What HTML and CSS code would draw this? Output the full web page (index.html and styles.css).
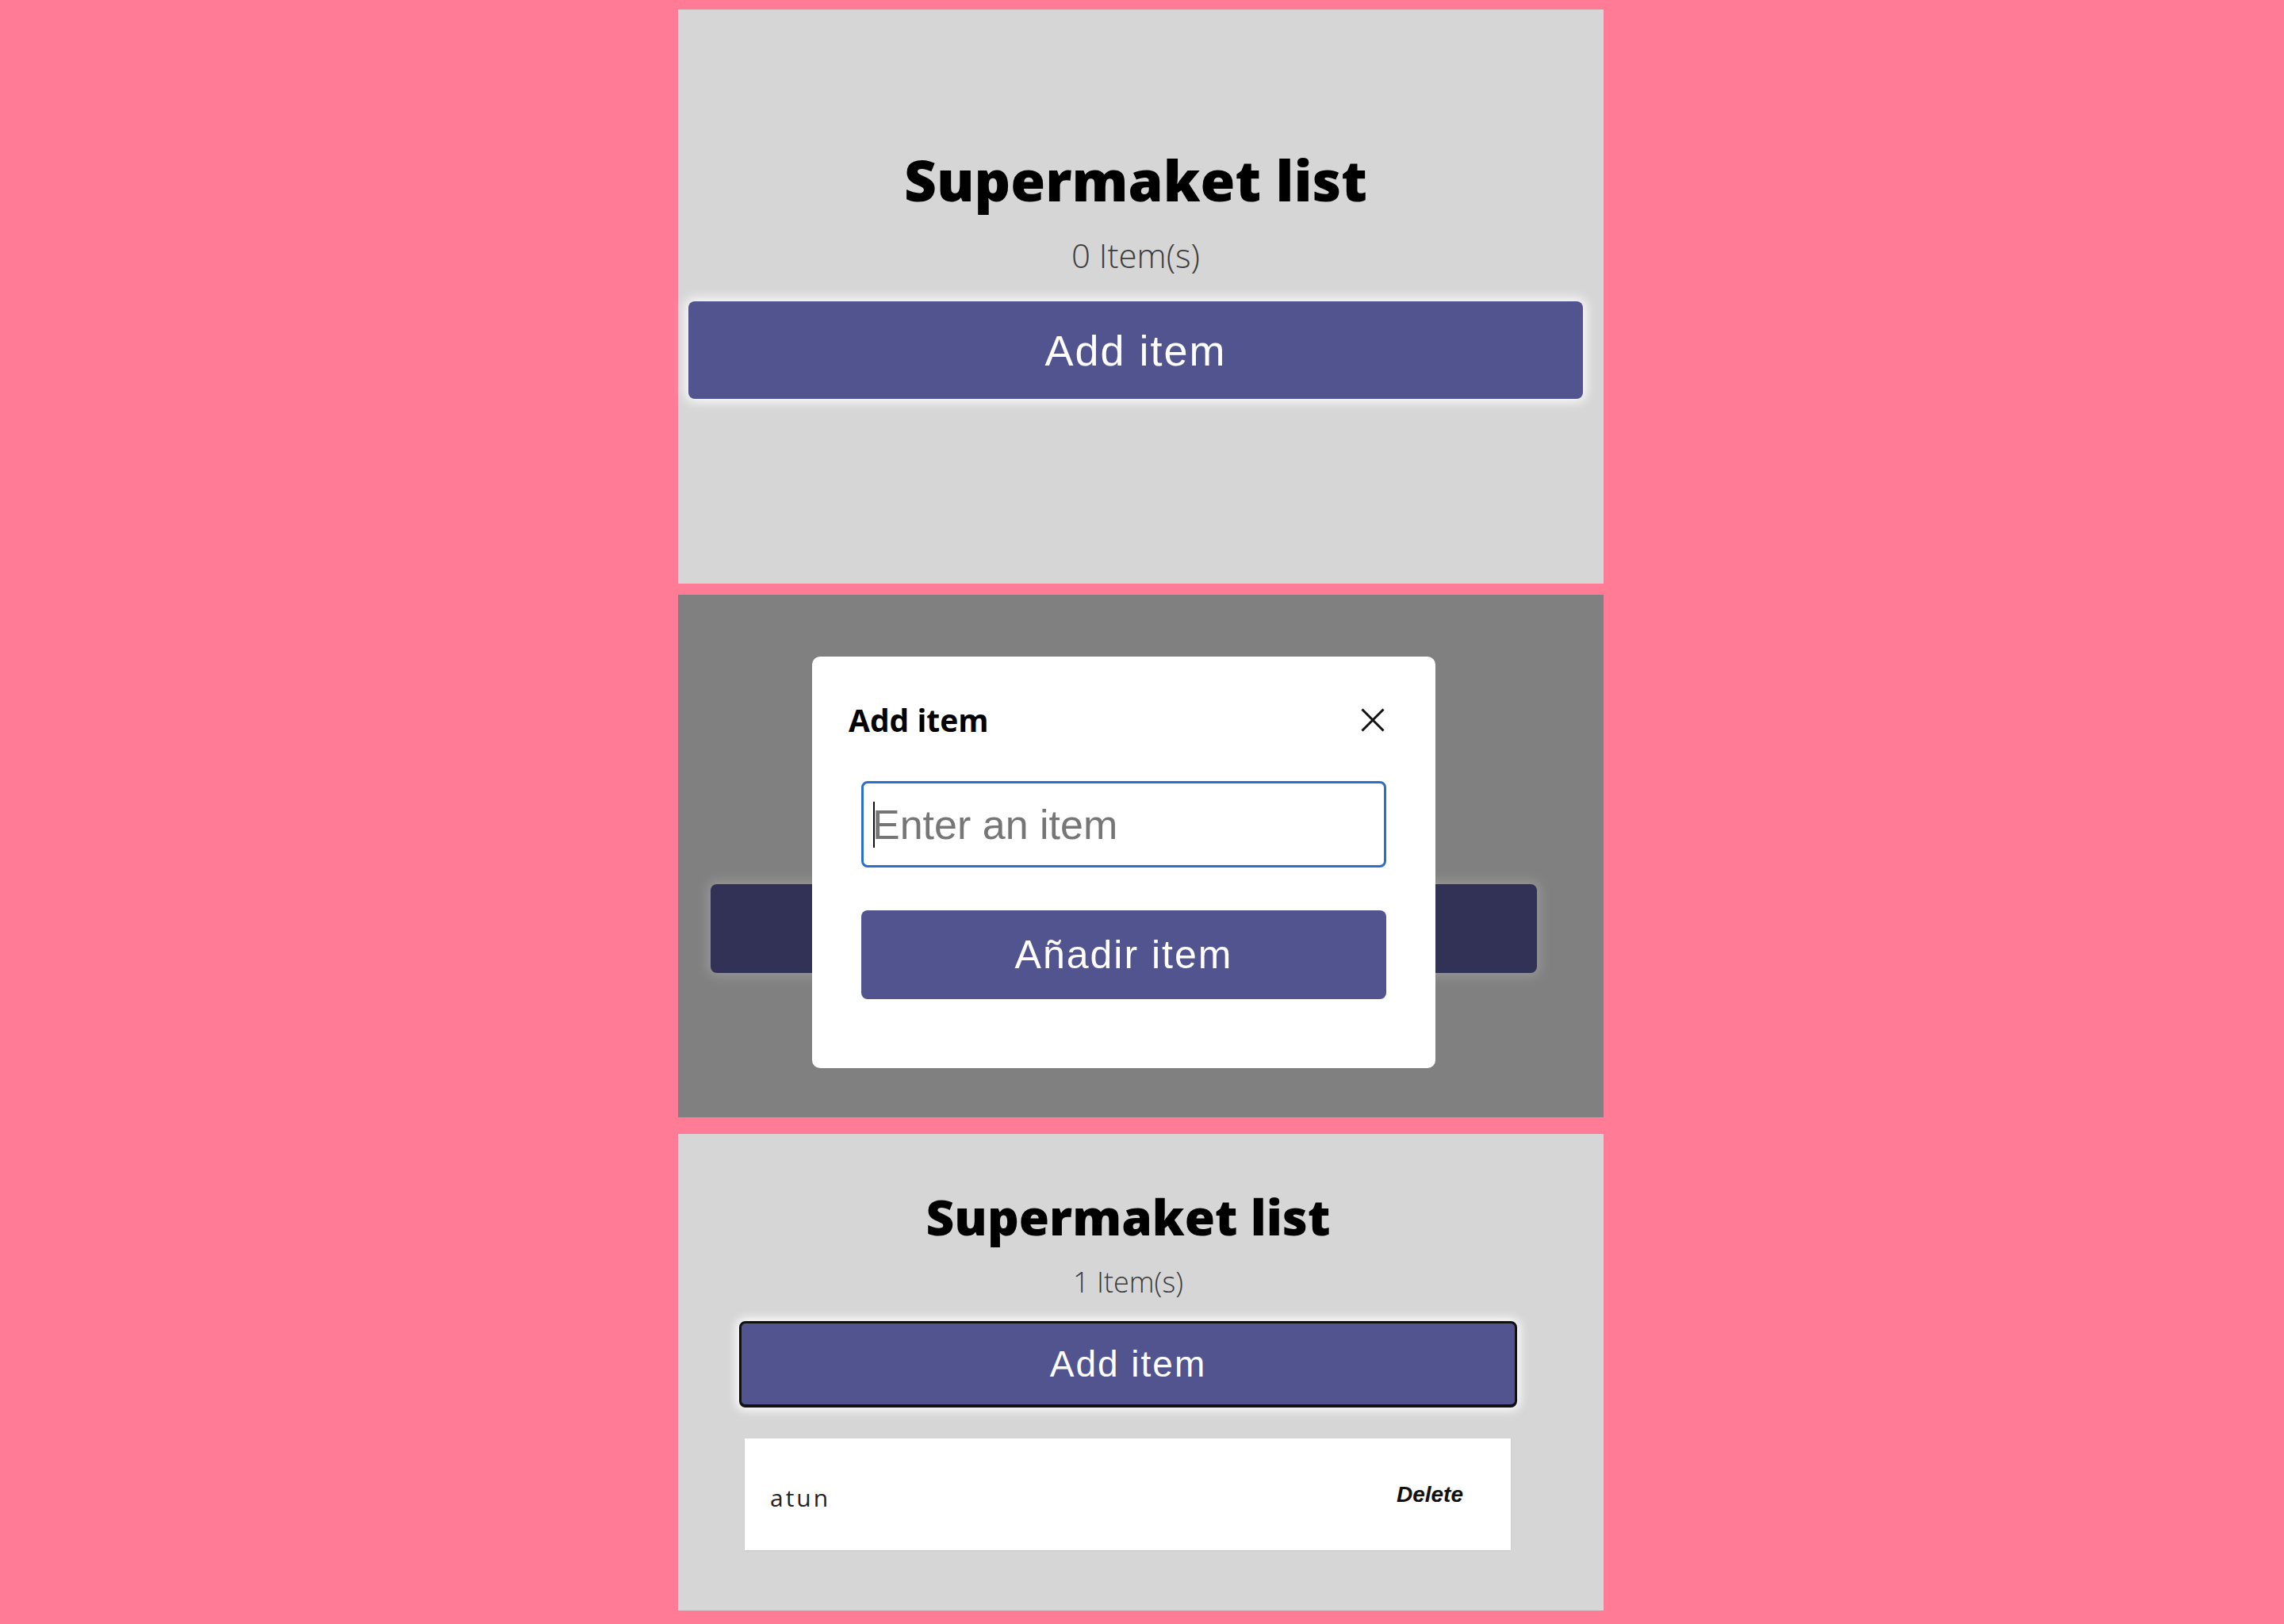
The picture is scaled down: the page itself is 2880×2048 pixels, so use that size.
FILE: index.html
```html
<!DOCTYPE html>
<html lang="en">
<head>
<meta charset="utf-8">
<title>Supermaket list</title>
<link rel="stylesheet" href="styles.css">
</head>
<body>
<main class="stack">
  <section class="screen screen-empty">
    <h1 class="title">Supermaket list</h1>
    <p class="count">0 Item(s)</p>
    <button class="add-btn" type="button">Add item</button>
  </section>

  <section class="screen screen-modal">
    <button class="add-btn" type="button" aria-label="Add item"></button>
    <div class="overlay">
      <div class="modal">
        <div class="modal-head">
          <h2 class="modal-title">Add item</h2>
          <button class="close" type="button" aria-label="Close">
            <svg width="30" height="30" viewBox="0 0 30 30" aria-hidden="true">
              <path d="M1.5 1.5 L28.5 28.5 M28.5 1.5 L1.5 28.5" stroke="#111" stroke-width="3" fill="none"/>
            </svg>
          </button>
        </div>
        <div class="field">
          <input class="field-input" type="text" placeholder="Enter an item">
          <span class="caret"></span>
        </div>
        <button class="submit" type="button">Añadir item</button>
      </div>
    </div>
  </section>

  <section class="screen screen-list">
    <h1 class="title">Supermaket list</h1>
    <p class="count">1 Item(s)</p>
    <button class="add-btn" type="button">Add item</button>
    <div class="item-card">
      <span class="item-name">atun</span>
      <span class="item-delete">Delete</span>
    </div>
  </section>
</main>
</body>
</html>
```

FILE: styles.css
```css
html, body {
  margin: 0;
  padding: 0;
}

body {
  background: #ff7b96;
  font-family: "Open Sans", sans-serif;
  width: 2880px;
  height: 2048px;
  overflow: hidden;
}

.stack {
  display: flex;
  flex-direction: column;
  align-items: center;
  padding-right: 3px;
}

.screen {
  width: 1167px;
  box-sizing: border-box;
  background: #d6d6d6;
  display: flex;
  flex-direction: column;
  align-items: center;
  position: relative;
}

.screen-empty {
  height: 724px;
  margin-top: 12px;
  padding: 179px 26px 0 13px;
}

.screen-modal {
  height: 659px;
  margin-top: 14px;
  padding: 365px 84px 0 41px;
  overflow: hidden;
}

.screen-list {
  height: 601px;
  margin-top: 21px;
  padding: 73px 109px 0 77px;
}

.title {
  margin: 0;
  font-family: "Open Sans", sans-serif;
  font-weight: 800;
  font-size: 71px;
  line-height: 1;
  color: #000;
  white-space: nowrap;
}

.count {
  margin: 39px 0 0;
  font-family: "Open Sans", sans-serif;
  font-weight: 300;
  font-size: 42px;
  line-height: 1;
  color: #3c3c3c;
}

.add-btn {
  margin-top: 37px;
  width: 100%;
  height: 123px;
  border: none;
  border-radius: 8px;
  background: #52548f;
  color: #fff;
  font-family: "Liberation Sans", Arial, sans-serif;
  font-size: 54px;
  letter-spacing: 2px;
  box-shadow: 0 0 14px 4px rgba(255, 255, 255, 0.9);
  padding: 0;
  flex: none;
}

.screen-modal .add-btn {
  margin-top: 0;
  height: 112px;
}

.screen-list .title {
  font-size: 62px;
}

.screen-list .count {
  margin-top: 34px;
  font-size: 36px;
}

.screen-list .add-btn {
  margin-top: 31px;
  height: 109px;
  border: 3px solid #111;
  border-bottom-width: 4px;
  font-size: 46px;
  box-shadow: 0 0 12px 4px rgba(255, 255, 255, 0.9);
}

/* Modal */
.overlay {
  position: absolute;
  inset: 0;
  background: rgba(0, 0, 0, 0.4);
  display: flex;
  align-items: center;
  justify-content: center;
  padding: 16px 43px 0 0;
  box-sizing: border-box;
}

.modal {
  width: 786px;
  height: 519px;
  background: #fff;
  border-radius: 10px;
  box-sizing: border-box;
  padding-top: 60px;
  display: flex;
  flex-direction: column;
}

.modal-head {
  display: flex;
  align-items: center;
  justify-content: space-between;
  padding: 0 64px 0 46px;
  height: 39px;
}

.modal-title {
  margin: 0;
  font-family: "Open Sans", sans-serif;
  font-weight: 700;
  font-size: 39px;
  line-height: 1;
  color: #000;
}

.close {
  border: none;
  background: none;
  padding: 0;
  width: 30px;
  height: 30px;
  display: flex;
}

.field {
  position: relative;
  margin: 58px 62px 0;
  height: 109px;
}

.field-input {
  width: 100%;
  height: 100%;
  box-sizing: border-box;
  border: 3px solid #2a6fcb;
  border-radius: 8px;
  outline: none;
  padding: 0 0 0 11px;
  font-family: "Liberation Sans", Arial, sans-serif;
  font-size: 52px;
  color: #111;
  background: #fff;
}

.field-input::placeholder {
  color: #767676;
}

.caret {
  position: absolute;
  left: 15px;
  top: 26px;
  width: 2px;
  height: 58px;
  background: #111;
}

.submit {
  margin: 54px 62px 0;
  height: 112px;
  border: none;
  border-radius: 8px;
  background: #52548f;
  color: #fff;
  font-family: "Liberation Sans", Arial, sans-serif;
  font-size: 50px;
  letter-spacing: 2px;
  padding: 0;
}

/* List item */
.item-card {
  align-self: stretch;
  margin: 39px 8px 0 7px;
  height: 141px;
  background: #fff;
  box-shadow: 0 1px 2px rgba(0, 0, 0, 0.08);
  display: flex;
  align-items: center;
  justify-content: space-between;
  padding: 0 60px 0 32px;
  box-sizing: border-box;
}

.item-name {
  font-family: "Open Sans", sans-serif;
  font-size: 30px;
  letter-spacing: 3px;
  color: #222;
  margin-top: 8px;
}

.item-delete {
  font-family: "Liberation Sans", Arial, sans-serif;
  font-weight: 700;
  font-style: italic;
  font-size: 28px;
  color: #111;
}
```
